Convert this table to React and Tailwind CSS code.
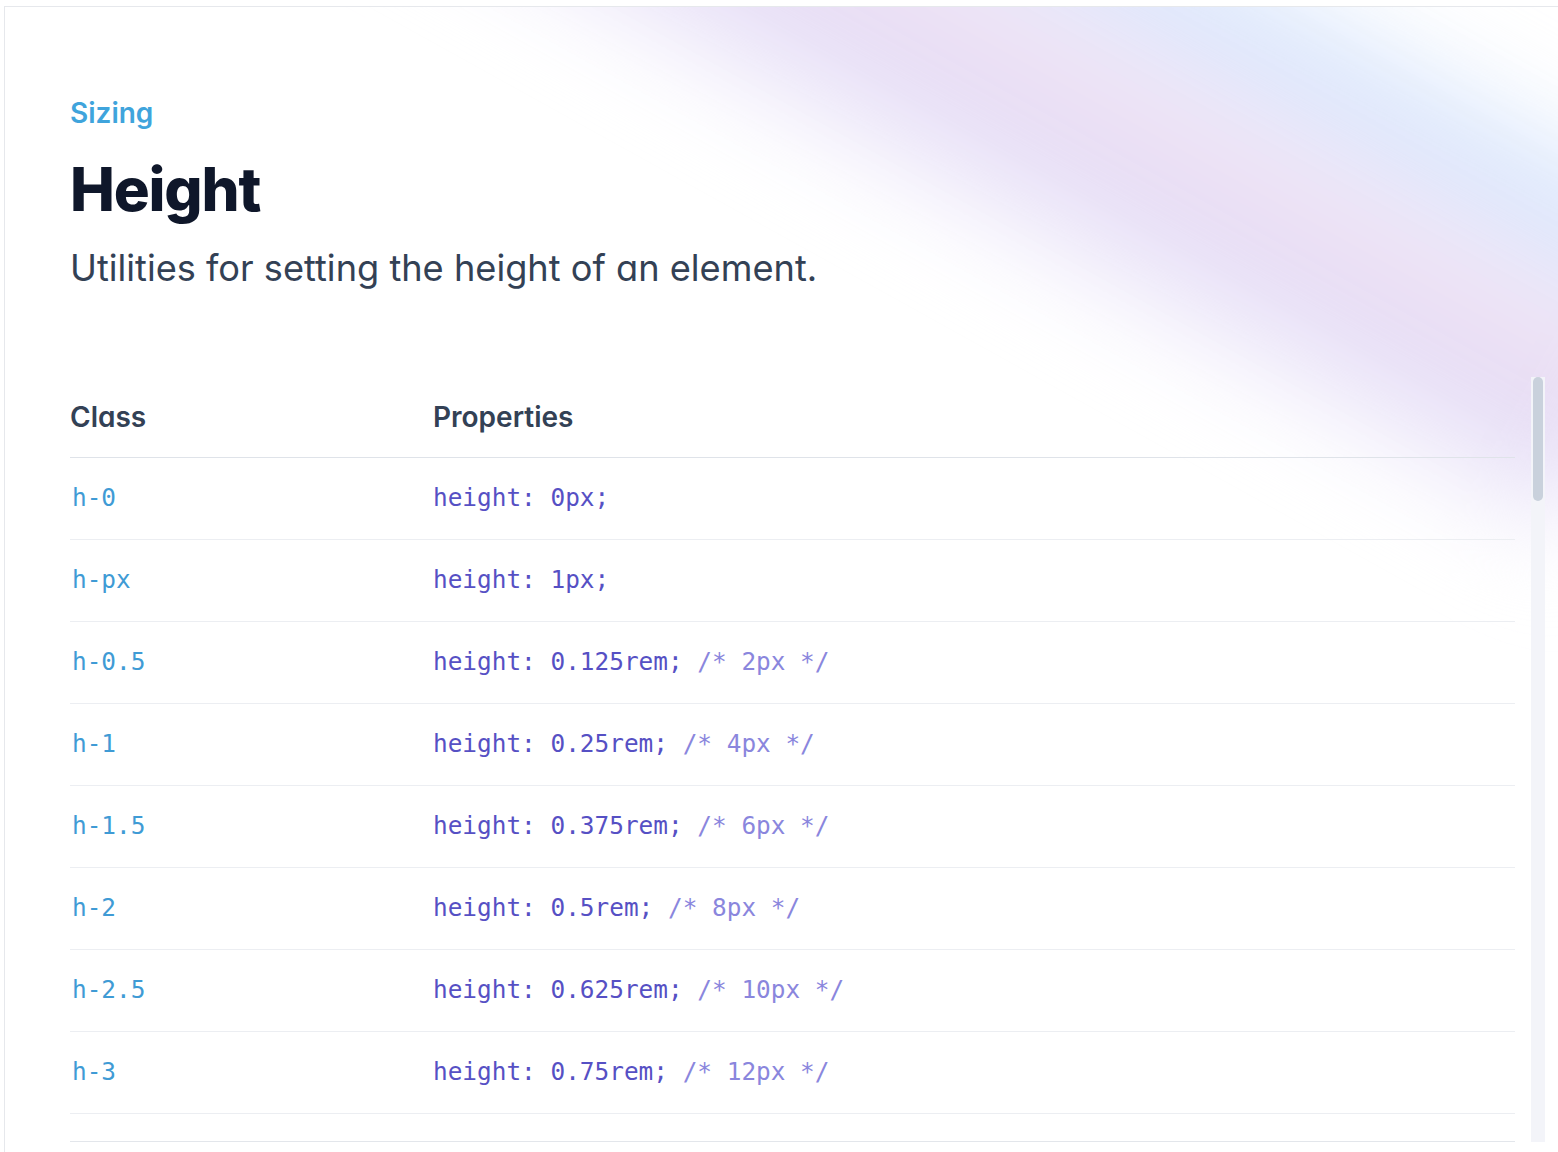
const rows = [
  ['h-0', '0px', null],
  ['h-px', '1px', null],
  ['h-0.5', '0.125rem', '2px'],
  ['h-1', '0.25rem', '4px'],
  ['h-1.5', '0.375rem', '6px'],
  ['h-2', '0.5rem', '8px'],
  ['h-2.5', '0.625rem', '10px'],
  ['h-3', '0.75rem', '12px'],
];

function Row({ name, value, px }) {
  return (
    <div className="flex items-center h-[82px] border-b border-[#eceef2]">
      <div className="w-[363px] pl-[2px] text-[#3f9bd5]">{name}</div>
      <div className="text-[#5650c4] whitespace-pre">
        {'height: ' + value + ';'}
        {px && <span className="text-[#8a86dd]">{' /* ' + px + ' */'}</span>}
      </div>
    </div>
  );
}

export default function App() {
  return (
    <div className="min-h-screen bg-white pt-[6px] pl-[4px] font-['Inter','Noto_Sans',sans-serif] [font-feature-settings:'cv11'] overflow-hidden">
      <div className="relative min-h-[1146px] border-t border-l border-[#e6e8ec] overflow-hidden">
        {/* background glow */}
        <div className="absolute inset-0 pointer-events-none">
          <div className="absolute left-[330px] top-[-160px] w-[1400px] h-[410px] rotate-[29deg] blur-[45px] bg-[linear-gradient(0deg,rgba(255,255,255,0)_0%,#eeeafa_16%,#e3d9f4_34%,#f1e3f3_50%,#edeafb_63%,#d4e3fb_80%,rgba(255,255,255,0)_100%)]" />
        </div>

        <div className="relative pl-[65px] pr-[13px]">
          <div className="pt-[85px]">
            <p className="text-[28px] leading-[42px] font-semibold text-[#3fa4dc]">Sizing</p>
            <h1 className="mt-[25px] text-[60px] leading-[60px] font-extrabold tracking-[-0.02em] text-[#0f172a]">Height</h1>
            <p className="mt-[24px] text-[36.2px] leading-[50px] text-[#334155]">Utilities for setting the height of an element.</p>
          </div>

          <div className="mt-[84px] flex gap-[16px]">
            <div className="flex-1">
              <div className="flex items-center h-[81px] border-b border-[#dfe3e9] text-[28px] font-semibold text-[#334155]">
                <div className="w-[363px]">Class</div>
                <div>Properties</div>
              </div>
              <div className="font-['DejaVu_Sans_Mono','Liberation_Mono',monospace] text-[24.4px]">
                {rows.map((r) => (
                  <Row key={r[0]} name={r[0]} value={r[1]} px={r[2]} />
                ))}
              </div>
              <div className="h-[28px] border-b border-[#e3e6eb]" />
            </div>
            {/* scrollbar */}
            <div className="w-[14px] bg-[#f3f4f9] flex justify-center">
              <div className="w-[10px] h-[124px] rounded-full bg-[#c9d1dc]" />
            </div>
          </div>
        </div>
      </div>
    </div>
  );
}
